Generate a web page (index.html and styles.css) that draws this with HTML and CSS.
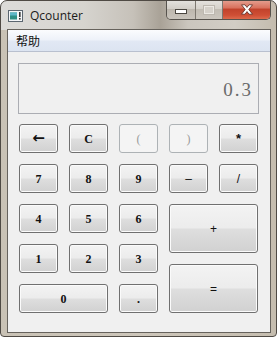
FILE: index.html
```html
<!DOCTYPE html>
<html>
<head>
<meta charset="utf-8">
<link rel="stylesheet" href="styles.css">
</head>
<body>
<div class="window">
  <div class="titlebar">
    <svg class="app-icon" width="15" height="12" viewBox="0 0 15 12">
      <rect x="0.5" y="0.5" width="14" height="11" fill="#f4f6f8" stroke="#5b6670"/>
      <rect x="2" y="2.5" width="7" height="7" fill="#2f8f86"/>
      <rect x="2" y="2.5" width="7" height="3" fill="#5fb7c9"/>
      <rect x="11" y="2" width="1.6" height="5" fill="#333"/>
      <rect x="11" y="8" width="1.6" height="1.6" fill="#333"/>
    </svg>
    <span class="title">Qcounter</span>
    <div class="caption">
      <div class="cb cb-min"><span class="min-glyph"></span></div>
      <div class="cb cb-max"><span class="max-glyph"></span></div>
      <div class="cb cb-close">
        <svg width="14" height="11" viewBox="0 0 14 11">
          <path d="M1.5 0.8 L5 0.8 L7 3.4 L9 0.8 L12.5 0.8 L8.8 5.5 L12.5 10.2 L9 10.2 L7 7.6 L5 10.2 L1.5 10.2 L5.2 5.5 Z" fill="#ffffff" stroke="#5a2a22" stroke-width="0.8"/>
        </svg>
      </div>
    </div>
  </div>
  <div class="client">
    <div class="menubar"><span class="menu-item">帮助</span></div>
    <div class="content">
      <div class="display">0.3</div>
      <div class="keys">
        <button class="btn arrow">&#8592;</button>
        <button class="btn">C</button>
        <button class="btn disabled">(</button>
        <button class="btn disabled">)</button>
        <button class="btn star">*</button>
        <button class="btn">7</button>
        <button class="btn">8</button>
        <button class="btn">9</button>
        <button class="btn thin">&#8211;</button>
        <button class="btn thin">/</button>
        <button class="btn">4</button>
        <button class="btn">5</button>
        <button class="btn">6</button>
        <button class="btn plus thin">+</button>
        <button class="btn r4c1">1</button>
        <button class="btn r4c2">2</button>
        <button class="btn r4c3">3</button>
        <button class="btn equal thin">=</button>
        <button class="btn zero">0</button>
        <button class="btn dot">.</button>
      </div>
    </div>
  </div>
</div>
</body>
</html>
```

FILE: styles.css
```css
html, body {
  margin: 0;
  padding: 0;
  background: #ffffff;
}

.window {
  width: 277px;
  height: 337px;
  box-sizing: border-box;
  border: 1px solid #4f4a44;
  border-radius: 7px 7px 4px 4px;
  padding: 0 5px 3px 6px;
  display: flex;
  flex-direction: column;
  overflow: hidden;
  background:
    linear-gradient(to right, #dcdbd8 0%, #d6d4cf 30%, #c6c1b9 48%, #a9a297 58%, #cbc6be 68%, #d2cdc5 85%, #c4bcae 100%) top / 100% 29px no-repeat,
    linear-gradient(to right, #c9c2b5, #cdc6ba 50%, #c5bdaf);
}

.titlebar {
  height: 28px;
  flex: none;
  display: flex;
  align-items: center;
}

.app-icon {
  margin-left: 1px;
  margin-top: 1px;
  flex: none;
}

.title {
  margin-left: 7px;
  font-family: "Open Sans", "Noto Sans", sans-serif;
  font-size: 12px;
  color: #1b1b1b;
  margin-top: 1px;
}

.caption {
  margin-left: auto;
  align-self: flex-start;
  margin-top: -1px;
  display: flex;
  height: 19px;
  border: 1px solid #57534d;
  border-top: none;
  border-radius: 0 0 5px 5px;
  overflow: hidden;
}

.cb {
  display: flex;
  align-items: center;
  justify-content: center;
}

.cb-min {
  width: 28px;
  border-right: 1px solid #7d7870;
  background: linear-gradient(#e5e3df 0%, #d3cfc8 45%, #bdb7ae 50%, #c9c4bc 100%);
}

.min-glyph {
  width: 10px;
  height: 3px;
  background: #ffffff;
  border: 1px solid #4a4640;
  margin-top: 4px;
}

.cb-max {
  width: 26px;
  border-right: 1px solid #7d7870;
  background: linear-gradient(#e5e3df 0%, #d6d2cb 45%, #c2bdb4 50%, #ccc7bf 100%);
}

.max-glyph {
  width: 8px;
  height: 6px;
  border: 1px solid #ece9e4;
  outline: 1px solid #bdb8b0;
  background: #d5d1ca;
}

.cb-close {
  width: 47px;
  background: linear-gradient(#e6a293 0%, #d9735f 40%, #c2432c 50%, #cf4f35 80%, #dc6a4c 100%);
}

.client {
  flex: 1;
  display: flex;
  flex-direction: column;
  border: 1px solid #66625c;
  background: #f0f0f0;
}

.menubar {
  height: 21px;
  border-bottom: 1px solid #b9c0cf;
  background: linear-gradient(#fbfcfe 0%, #eef2f9 45%, #e1e8f4 55%, #dce4f1 100%);
  display: flex;
  align-items: center;
  padding-left: 8px;
}

.menu-item {
  font-family: "Noto Sans CJK SC", "Noto Sans", sans-serif;
  font-size: 12px;
  color: #111111;
}

.content {
  padding: 11px 0 0 10px;
  display: flex;
  flex-direction: column;
}

.display {
  width: 241px;
  height: 51px;
  box-sizing: border-box;
  border: 1px solid #abadb3;
  background: #f0f0f0;
  display: flex;
  align-items: center;
  justify-content: flex-end;
  padding: 2px 5px 0 0;
  font-family: "Liberation Serif", serif;
  font-size: 19px;
  letter-spacing: 2px;
  color: #6a6a6a;
}

.keys {
  margin: 10px 0 0 1px;
  display: grid;
  grid-template-columns: repeat(5, 39px);
  grid-template-rows: repeat(5, 29px);
  gap: 11px;
}

.btn {
  margin: 0;
  padding: 0;
  box-sizing: border-box;
  border: 1px solid #707070;
  border-radius: 3px;
  background: linear-gradient(#f3f3f3 0%, #ececec 48%, #dedede 52%, #d1d1d1 100%);
  box-shadow: inset 0 0 0 1px #fbfbfb;
  font-family: "Liberation Serif", serif;
  font-weight: bold;
  font-size: 12px;
  color: #111111;
  line-height: 1;
}

.btn.thin {
  font-family: "Liberation Sans", sans-serif;
  font-weight: normal;
}

.btn.arrow {
  font-family: "DejaVu Sans", sans-serif;
  font-size: 15px;
  font-weight: bold;
}

.btn.star {
  font-family: "Liberation Sans", sans-serif;
  font-size: 13px;
}

.btn.disabled {
  border-color: #adb2b5;
  background: #f4f4f4;
  box-shadow: none;
  color: #9a9a9a;
  font-weight: normal;
}

.plus {
  grid-column: 4 / 6;
  grid-row: 3 / 5;
  height: 49px;
  align-self: start;
}

.equal {
  grid-column: 4 / 6;
  grid-row: 4 / 6;
  height: 49px;
  align-self: end;
}

.r4c1 { grid-column: 1; grid-row: 4; }
.r4c2 { grid-column: 2; grid-row: 4; }
.r4c3 { grid-column: 3; grid-row: 4; }

.zero {
  grid-column: 1 / 3;
  grid-row: 5;
}

.dot {
  grid-column: 3;
  grid-row: 5;
}
```
